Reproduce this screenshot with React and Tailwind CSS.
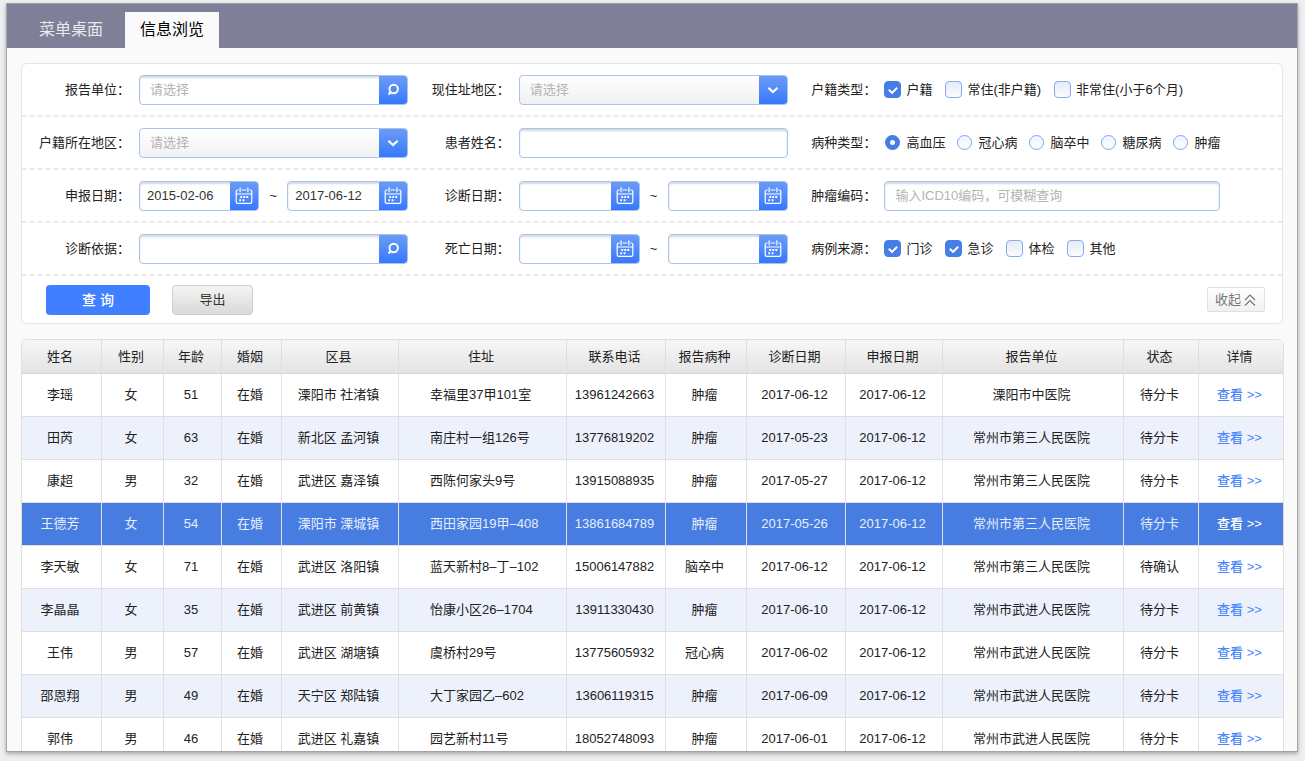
import React, { useState } from 'react';

const COLUMNS = [
  { title: '姓名', width: 'w-[80px]' },
  { title: '性别', width: 'w-[62px]' },
  { title: '年龄', width: 'w-[58px]' },
  { title: '婚姻', width: 'w-[60px]' },
  { title: '区县', width: 'w-[117px]' },
  { title: '住址', width: 'w-[168px]' },
  { title: '联系电话', width: 'w-[99px]' },
  { title: '报告病种', width: 'w-[81px]' },
  { title: '诊断日期', width: 'w-[99px]' },
  { title: '申报日期', width: 'w-[97px]' },
  { title: '报告单位', width: 'w-[181px]' },
  { title: '状态', width: 'w-[75px]' },
  { title: '详情', width: 'w-[85px]' },
];

const PATIENTS = [
  ['李瑶', '女', '51', '在婚', '溧阳市 社渚镇', '幸福里37甲101室', '13961242663', '肿瘤', '2017-06-12', '2017-06-12', '溧阳市中医院', '待分卡'],
  ['田芮', '女', '63', '在婚', '新北区 孟河镇', '南庄村一组126号', '13776819202', '肿瘤', '2017-05-23', '2017-06-12', '常州市第三人民医院', '待分卡'],
  ['康超', '男', '32', '在婚', '武进区 嘉泽镇', '西陈何家头9号', '13915088935', '肿瘤', '2017-05-27', '2017-06-12', '常州市第三人民医院', '待分卡'],
  ['王德芳', '女', '54', '在婚', '溧阳市 溧城镇', '西田家园19甲–408', '13861684789', '肿瘤', '2017-05-26', '2017-06-12', '常州市第三人民医院', '待分卡'],
  ['李天敏', '女', '71', '在婚', '武进区 洛阳镇', '蓝天新村8–丁–102', '15006147882', '脑卒中', '2017-06-12', '2017-06-12', '常州市第三人民医院', '待确认'],
  ['李晶晶', '女', '35', '在婚', '武进区 前黄镇', '怡康小区26–1704', '13911330430', '肿瘤', '2017-06-10', '2017-06-12', '常州市武进人民医院', '待分卡'],
  ['王伟', '男', '57', '在婚', '武进区 湖塘镇', '虞桥村29号', '13775605932', '冠心病', '2017-06-02', '2017-06-12', '常州市武进人民医院', '待分卡'],
  ['邵恩翔', '男', '49', '在婚', '天宁区 郑陆镇', '大丁家园乙–602', '13606119315', '肿瘤', '2017-06-09', '2017-06-12', '常州市武进人民医院', '待分卡'],
  ['郭伟', '男', '46', '在婚', '武进区 礼嘉镇', '园艺新村11号', '18052748093', '肿瘤', '2017-06-01', '2017-06-12', '常州市武进人民医院', '待分卡'],
];

const ADDRESS_COL = 5;

const SearchIcon = () => (
  <svg viewBox="0 0 14 14" className="h-3.5 w-3.5" fill="none" stroke="currentColor" strokeLinecap="round">
    <circle cx="7.7" cy="6" r="4.2" strokeWidth="1.9" />
    <path d="M4.300 9.500 3.200 10.800" strokeWidth="2.300" />
  </svg>
);

const ArrowIcon = () => (
  <svg viewBox="0 0 14 14" className="h-3.5 w-3.5" fill="none" stroke="currentColor" strokeWidth="2.2">
    <path d="M2.4 4.8 7 9l4.6-4.2" />
  </svg>
);

const CollapseIcon = () => (
  <svg viewBox="0 0 14 14" className="h-3.5 w-3.5" fill="none" stroke="currentColor" strokeWidth="1.2">
    <path d="M2 7 7 2l5 5M2 12.500l5-5 5 5" />
  </svg>
);

const CalendarIcon = () => (
  <svg viewBox="0 0 18 18" className="h-[18px] w-[18px]" fill="none" stroke="currentColor" strokeWidth="1.2">
    <path d="M3.6 3H2.8Q1.2 3 1.2 4.6v10.2q0 1.6 1.6 1.6h12.4q1.6 0 1.6-1.6V4.6Q16.8 3 15.2 3h-.8M6.6 3h4.8M1.2 7h15.6" />
    <path d="M5.1.8v4M12.900.8v4" strokeLinecap="round" />
    <path d="M5.3 10h1.9M8.300 10h1.900M11.300 10h1.900M4.200 13.300h1.900M7.600 13.300h1.900" strokeWidth="1.9" />
  </svg>
);

const boxClass = 'flex h-[30px] min-w-0 flex-1 overflow-hidden rounded border border-[#a9c4ea]';
const insetClass = 'bg-white shadow-[inset_0_2px_2px_#d5dae2]';
const inputClass = 'h-full w-full min-w-0 flex-1 bg-transparent text-[13px] text-[#333] outline-none placeholder:text-[#b4b4b4]';
const addonClass = 'flex w-7 shrink-0 items-center justify-center bg-linear-to-b from-[#6b9bf6] to-[#3678fd] text-white';

const Row = ({ children }) => (
  <div>
    <div className="grid h-[51px] grid-cols-[386fr_381fr_494fr] items-center">{children}</div>
    <div className="h-0.5 bg-[repeating-linear-gradient(90deg,#ebebeb_0_5px,transparent_5px_8px)]" />
  </div>
);

const labelSizes = {
  first: 'w-[108px] mr-[9px]',
  second: 'w-[102px] mr-[9px]',
  third: 'w-[88px] mr-2',
};

const Field = ({ id, label, col, group, children }) => (
  <div className="flex items-center" role={group ? 'group' : undefined} aria-label={group ? label : undefined}>
    {group ? (
      <span className={`shrink-0 text-right ${labelSizes[col]}`}>{label}：</span>
    ) : (
      <label htmlFor={id} className={`shrink-0 text-right ${labelSizes[col]}`}>{label}：</label>
    )}
    {children}
  </div>
);

const SearchBox = ({ id, placeholder }) => (
  <div className={`${boxClass} ${insetClass}`}>
    <input id={id} type="text" placeholder={placeholder} className={`${inputClass} px-2.5`} />
    <button type="button" aria-label="搜索" className={addonClass}><SearchIcon /></button>
  </div>
);

const SelectBox = ({ id }) => (
  <div className={`${boxClass} bg-linear-to-b from-white to-[#f1f1f1]`}>
    <select id={id} className="h-full min-w-0 flex-1 appearance-none bg-transparent px-2.5 text-[13px] text-[#b4b4b4] outline-none">
      <option>请选择</option>
    </select>
    <span className={addonClass}><ArrowIcon /></span>
  </div>
);

const DateBox = ({ id, label, value }) => (
  <div className={`${boxClass} ${insetClass}`}>
    <input id={id} type="text" aria-label={label} defaultValue={value} className={`${inputClass} pl-[7px]`} />
    <button type="button" aria-label="选择日期" className={addonClass}><CalendarIcon /></button>
  </div>
);

const DateRange = ({ id, label, from = '', to = '' }) => (
  <>
    <DateBox id={id} value={from} />
    <span className="w-7 text-center">~</span>
    <DateBox id={`${id}-end`} label={`${label}结束`} value={to} />
  </>
);

const Tick = ({ label, checked }) => (
  <label className="flex items-center gap-[5px] whitespace-nowrap">
    <span className="grid place-items-center">
      <input
        type="checkbox"
        defaultChecked={checked}
        className="peer col-start-1 row-start-1 h-[17px] w-[17px] appearance-none rounded border border-[#86aaf0] bg-linear-to-b from-[#e6ebf6] to-[#fafcff] checked:border-[#477de6] checked:bg-[#477de6] checked:bg-none"
      />
      <svg viewBox="0 0 12 12" className="pointer-events-none invisible col-start-1 row-start-1 h-3 w-3 peer-checked:visible" fill="none" stroke="#fff" strokeWidth="2">
        <path d="M1.8 5.8 5 8.9l5.2-5.2" />
      </svg>
    </span>
    {label}
  </label>
);

const Radio = ({ label, name, checked }) => (
  <label className="flex items-center gap-[5px] whitespace-nowrap">
    <input
      type="radio"
      name={name}
      defaultChecked={checked}
      className="mx-px h-[15px] w-[15px] appearance-none rounded-full border border-[#7ca5f2] bg-linear-to-b from-[#eef3fd] to-white checked:border-[5px] checked:border-[#477de6] checked:bg-white checked:bg-none"
    />
    {label}
  </label>
);

const FilterPanel = () => (
  <form className="rounded-md border border-[#e4e4e4] bg-white" onSubmit={(e) => e.preventDefault()}>
    <Row>
      <Field id="report-unit" label="报告单位" col="first"><SearchBox id="report-unit" placeholder="请选择" /></Field>
      <Field id="live-area" label="现住址地区" col="second"><SelectBox id="live-area" /></Field>
      <Field label="户籍类型" col="third" group>
        <div className="flex gap-[13px]">
          <Tick label="户籍" checked />
          <Tick label="常住(非户籍)" />
          <Tick label="非常住(小于6个月)" />
        </div>
      </Field>
    </Row>
    <Row>
      <Field id="home-area" label="户籍所在地区" col="first"><SelectBox id="home-area" /></Field>
      <Field id="patient-name" label="患者姓名" col="second">
        <div className={`${boxClass} ${insetClass}`}>
          <input id="patient-name" type="text" className={`${inputClass} px-2.5`} />
        </div>
      </Field>
      <Field label="病种类型" col="third" group>
        <div className="flex gap-[11px]">
          {['高血压', '冠心病', '脑卒中', '糖尿病', '肿瘤'].map((name, i) => (
            <Radio key={name} label={name} name="disease" checked={i === 0} />
          ))}
        </div>
      </Field>
    </Row>
    <Row>
      <Field id="declare-date" label="申报日期" col="first">
        <DateRange id="declare-date" label="申报日期" from="2015-02-06" to="2017-06-12" />
      </Field>
      <Field id="diagnose-date" label="诊断日期" col="second"><DateRange id="diagnose-date" label="诊断日期" /></Field>
      <Field id="icd-code" label="肿瘤编码" col="third">
        <div className={`${boxClass} ${insetClass} max-w-[336px]`}>
          <input id="icd-code" type="text" placeholder="输入ICD10编码，可模糊查询" className={`${inputClass} px-2.5`} />
        </div>
      </Field>
    </Row>
    <Row>
      <Field id="diagnose-basis" label="诊断依据" col="first"><SearchBox id="diagnose-basis" /></Field>
      <Field id="death-date" label="死亡日期" col="second"><DateRange id="death-date" label="死亡日期" /></Field>
      <Field label="病例来源" col="third" group>
        <div className="flex gap-[13px]">
          <Tick label="门诊" checked />
          <Tick label="急诊" checked />
          <Tick label="体检" />
          <Tick label="其他" />
        </div>
      </Field>
    </Row>
    <div className="flex h-[47px] items-center pr-[17px] pl-6">
      <button type="submit" className="h-[30px] w-[104px] rounded bg-[#407fff] text-sm font-medium text-white">查 询</button>
      <button type="button" className="ml-[22px] h-[30px] w-[81px] rounded border border-[#cfcfcf] bg-linear-to-b from-[#f4f4f4] to-[#d9d9d9] text-[13px] text-[#333]">导出</button>
      <button type="button" className="ml-auto flex h-[25px] w-[58px] items-center justify-center gap-0.5 rounded-xs border border-[#e0e0e0] bg-linear-to-b from-white to-[#f1f1f1] text-[13px] text-[#777]">
        收起
        <CollapseIcon />
      </button>
    </div>
  </form>
);

const PatientTable = () => {
  const [selected, setSelected] = useState(3);

  return (
    <table className="w-full table-fixed border-separate border-spacing-0 overflow-hidden rounded-t-md border-t border-l border-[#dfdfdf] text-center">
      <thead>
        <tr className="bg-linear-to-b from-[#f7f7f7] to-[#e3e3e3]">
          {COLUMNS.map((col) => (
            <th key={col.title} className={`h-[34px] border-r border-b border-r-[#dfdfdf] border-b-[#d6d6d6] py-0 pr-[3px] pl-0 font-normal ${col.width}`}>
              {col.title}
            </th>
          ))}
        </tr>
      </thead>
      <tbody>
        {PATIENTS.map((row, i) => {
          const active = i === selected;
          return (
            <tr
              key={row[6]}
              onClick={() => setSelected(i)}
              className={active ? 'bg-[#477de1] text-[#e6eefc]' : 'bg-white even:bg-[#ecf1fb]'}
            >
              {row.map((cell, c) => (
                <td key={c} className={`h-[43px] border-r border-b border-[#dfdfdf] py-0 pr-[3px] whitespace-nowrap ${c === ADDRESS_COL ? 'pl-[31px] text-left' : 'pl-0'}`}>
                  {cell}
                </td>
              ))}
              <td className="h-[43px] border-r border-b border-[#dfdfdf] py-0 pr-[3px] pl-0">
                <a href="#detail" className={`font-medium ${active ? 'text-white' : 'text-[#4a87fb]'}`}>查看 &gt;&gt;</a>
              </td>
            </tr>
          );
        })}
      </tbody>
    </table>
  );
};

const App = () => (
  <div className="h-screen bg-[#eceef0] pt-[3px] pr-[7px] pb-[9px] pl-1.5 font-['Liberation_Sans','Noto_Sans_CJK_SC',sans-serif] text-[13px] leading-5 text-[#222]">
    <div className="flex h-full flex-col overflow-hidden border border-[#a3a3a6] bg-[#fafafa] shadow-[0_2px_4px_#a8a8a8]">
      <nav className="flex h-11 shrink-0 items-end bg-[#7f8097] text-base">
        <a href="#desktop" className="flex h-9 w-[118px] items-center justify-center pl-2.5 text-[#e9e9ee]">菜单桌面</a>
        <a href="#browse" aria-current="page" className="flex h-9 w-[94px] items-center justify-center bg-[#fafafa] text-black">信息浏览</a>
      </nav>
      <main className="flex min-h-0 flex-1 flex-col gap-[15px] overflow-y-auto px-3.5 pt-[15px] [scrollbar-width:none]">
        <FilterPanel />
        <PatientTable />
      </main>
    </div>
  </div>
);

export default App;
